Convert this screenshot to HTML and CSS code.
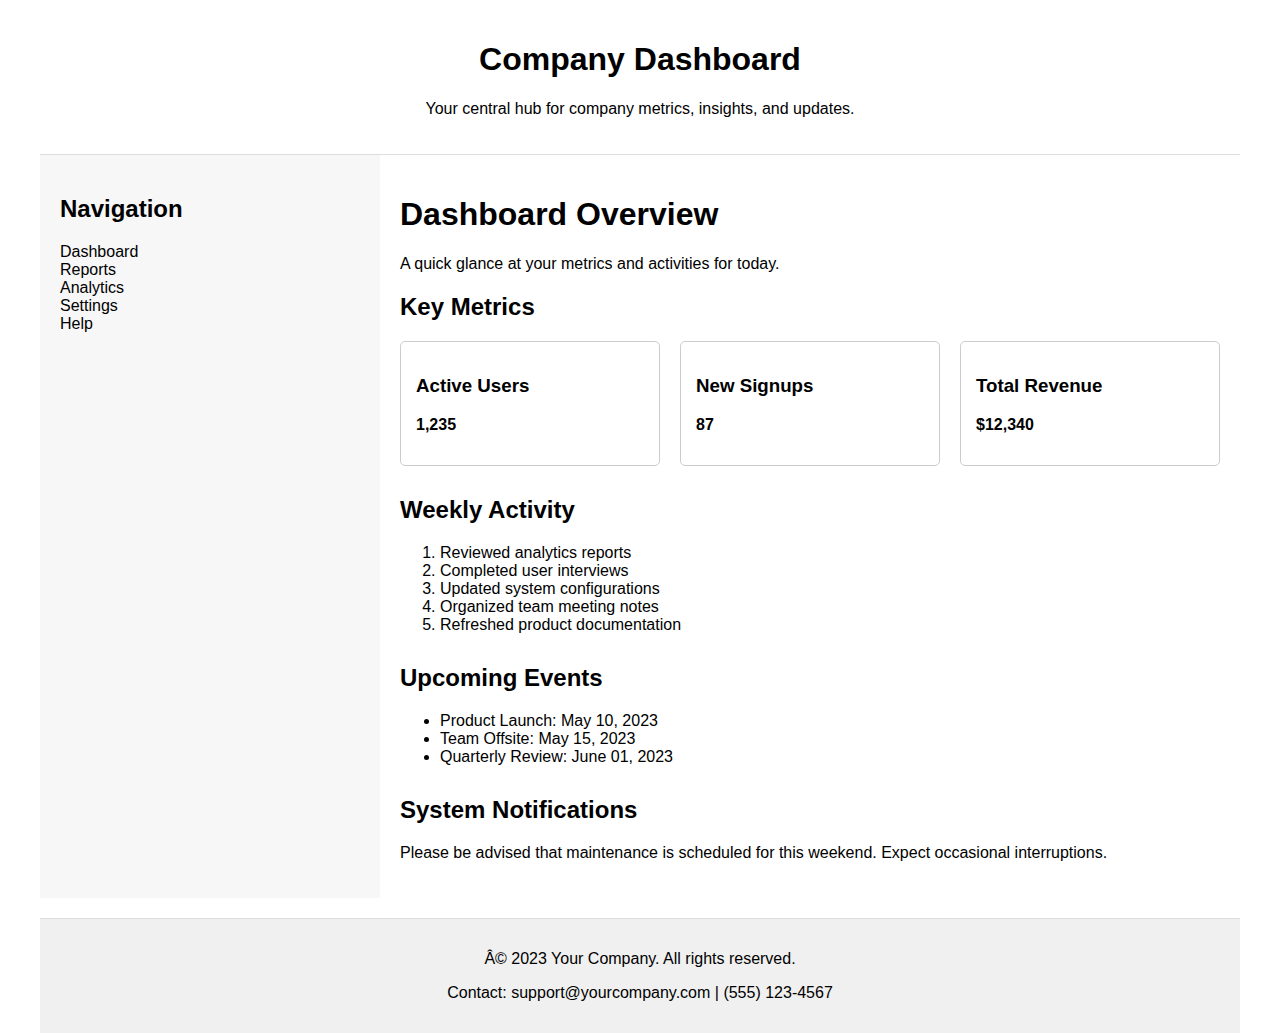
FILE: index.html
```html
<!DOCTYPE html>
<html lang="en">
<head>
<meta charset="utf-8">
<title>Company Dashboard</title>
<link rel="stylesheet" href="styles.css">
</head>
<body>
<div class="page">
  <header class="site-header">
    <h1>Company Dashboard</h1>
    <p>Your central hub for company metrics, insights, and updates.</p>
  </header>
  <div class="layout">
    <aside class="sidebar">
      <h2>Navigation</h2>
      <ul class="nav">
        <li>Dashboard</li>
        <li>Reports</li>
        <li>Analytics</li>
        <li>Settings</li>
        <li>Help</li>
      </ul>
    </aside>
    <main class="main">
      <div class="intro">
        <h1>Dashboard Overview</h1>
        <p>A quick glance at your metrics and activities for today.</p>
      </div>
      <section class="section">
        <h2>Key Metrics</h2>
        <div class="cards">
          <div class="card"><h3>Active Users</h3><p class="value">1,235</p></div>
          <div class="card"><h3>New Signups</h3><p class="value">87</p></div>
          <div class="card"><h3>Total Revenue</h3><p class="value">$12,340</p></div>
        </div>
      </section>
      <section class="section">
        <h2>Weekly Activity</h2>
        <ol class="list">
          <li>Reviewed analytics reports</li>
          <li>Completed user interviews</li>
          <li>Updated system configurations</li>
          <li>Organized team meeting notes</li>
          <li>Refreshed product documentation</li>
        </ol>
      </section>
      <section class="section">
        <h2>Upcoming Events</h2>
        <ul class="list">
          <li>Product Launch: May 10, 2023</li>
          <li>Team Offsite: May 15, 2023</li>
          <li>Quarterly Review: June 01, 2023</li>
        </ul>
      </section>
      <section class="section">
        <h2>System Notifications</h2>
        <p>Please be advised that maintenance is scheduled for this weekend. Expect occasional interruptions.</p>
      </section>
    </main>
  </div>
  <footer class="site-footer">
    <p>Â© 2023 Your Company. All rights reserved.</p>
    <p>Contact: support@yourcompany.com | (555) 123-4567</p>
  </footer>
</div>
</body>
</html>
```
FILE: styles.css
```css
html, body {
  margin: 0;
  padding: 0;
  background: #ffffff;
  color: #000000;
  font-family: "Liberation Sans", Arial, sans-serif;
  font-size: 16px;
}

.page {
  padding: 0 40px;
}

.site-header {
  text-align: center;
  padding: 20px 0;
  border-bottom: 1px solid #dddddd;
}

.site-header h1 {
  font-size: 32px;
  margin: 21.44px 0;
}

.site-header p {
  margin: 16px 0;
}

.layout {
  display: flex;
  margin-bottom: 20px;
}

.sidebar {
  width: 340px;
  flex-shrink: 0;
  box-sizing: border-box;
  padding: 20px;
  background: #f7f7f7;
}

.sidebar h2 {
  font-size: 24px;
  margin: 19.92px 0;
}

.nav {
  list-style: none;
  margin: 0;
  padding: 0;
}

.main {
  flex: 1;
  padding: 20px;
  min-width: 0;
}

.intro h1 {
  font-size: 32px;
  margin: 21.44px 0;
}

.intro p {
  margin: 16px 0;
}

.section {
  margin-bottom: 30px;
}

.section:last-child {
  margin-bottom: 0;
}

.section h2 {
  font-size: 24px;
  margin: 19.92px 0;
}

.section p {
  margin: 16px 0;
}

.cards {
  display: grid;
  grid-template-columns: repeat(3, 1fr);
  gap: 20px;
}

.card {
  border: 1px solid #cccccc;
  border-radius: 5px;
  padding: 15px;
}

.card h3 {
  font-size: 18.72px;
  margin: 18.72px 0;
}

.card .value {
  font-weight: bold;
  margin: 16px 0;
}

.list {
  margin: 16px 0;
  padding-left: 40px;
}

.site-footer {
  text-align: center;
  background: #f0f0f0;
  border-top: 1px solid #dddddd;
  padding: 15px;
}

.site-footer p {
  margin: 16px 0;
}
```
